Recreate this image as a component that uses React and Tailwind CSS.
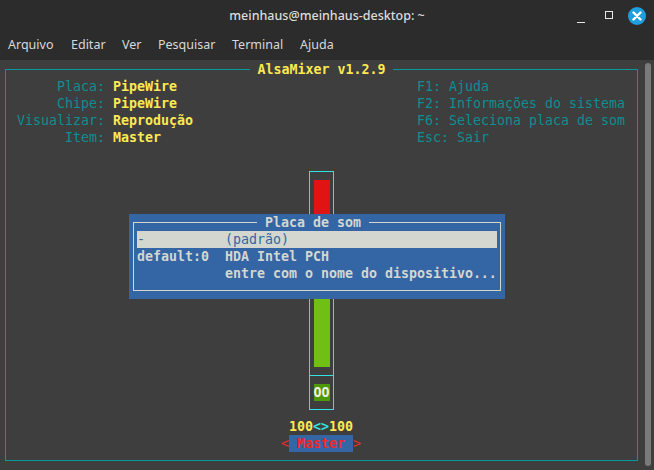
const mono = "font-['DejaVu_Sans_Mono','Liberation_Mono',monospace]";

function Row({ className = "", children }) {
  return <div className={"h-[17px] leading-[17px] whitespace-pre " + className}>{children}</div>;
}

const left = [
  ["Placa:", "PipeWire"],
  ["Chipe:", "PipeWire"],
  ["Visualizar:", "Reprodução"],
  ["Item:", "Master"],
];
const help = ["F1: Ajuda", "F2: Informações do sistema", "F6: Seleciona placa de som", "Esc: Sair"];
const menu = [
  ["Arquivo", "w-[63px]"],
  ["Editar", "w-[51px]"],
  ["Ver", "w-[36px]"],
  ["Pesquisar", "w-[74px]"],
  ["Terminal", "w-[68px]"],
  ["Ajuda", "w-[40px]"],
];

export default function App() {
  return (
    <div className="w-[654px] h-[470px] overflow-hidden bg-[#2c2c2c]">
      <div className="h-[60px] bg-[#2c2c2c] rounded-tr-[6px] flex flex-col font-['Noto_Sans',sans-serif] text-[12.5px] text-[#d8d8d8]">
        <div className="h-[32px] flex items-center relative">
          <div className="flex-1 text-center font-medium text-[#dcdcdc]">meinhaus@meinhaus-desktop: ~</div>
          <div className="absolute right-[8px] top-[7px] flex items-center">
            <svg width="8" height="8" viewBox="0 0 8 8" className="mt-[6px] mr-[20px]"><path d="M0 7.5H8" stroke="#e8e8e8" /></svg>
            <svg width="8" height="8" viewBox="0 0 8 8" className="-mt-[2px] mr-[15px]"><rect x="0.5" y="0.5" width="7" height="7" fill="none" stroke="#e8e8e8" /></svg>
            <div className="w-[18px] h-[18px] rounded-full bg-[#1f9ede] flex items-center justify-center">
              <svg width="10" height="10" viewBox="0 0 10 10"><path d="M1.5 1.5L8.5 8.5M8.5 1.5L1.5 8.5" stroke="#fff" strokeWidth="2.4" strokeLinecap="round" /></svg>
            </div>
          </div>
        </div>
        <div className="h-[28px] flex items-center pl-[8px] pb-[2px]">
          {menu.map(([m, w]) => <span key={m} className={w}>{m}</span>)}
        </div>
      </div>

      <div className={"relative h-[410px] pt-[9px] pl-[5px] text-[13.29px] font-normal bg-[#3e3e3e] " + mono}>
        <div className="absolute left-[645px] top-[3px] w-[6px] h-[403px] rounded-full bg-[#7a7a7a]" />

        <div className="w-[633px] h-[392px] border border-[#06989a] flex flex-col">
          <div className="self-center -mt-[9px] h-[17px] leading-[17px] px-[8px] bg-[#3e3e3e] font-bold text-[#fce94f] whitespace-pre">AlsaMixer v1.2.9</div>

          <div className="flex justify-between pr-[12px]">
            <div className="flex flex-col">
              {left.map(([a, b]) => (
                <Row key={a} className="flex gap-[8px]">
                  <span className="w-[99px] text-right text-[#0a8f96]">{a}</span>
                  <span className="font-bold text-[#fce94f]">{b}</span>
                </Row>
              ))}
            </div>
            <div className="flex flex-col w-[208px] text-[#0a8f96]">
              {help.map((h) => <Row key={h}>{h}</Row>)}
            </div>
          </div>

          <div className="self-center w-[65px] mt-[25px] flex flex-col items-start">
            <div className="ml-[20px] w-[25px] h-[239px] border border-[#34e2e2] flex flex-col items-center">
              <div className="w-[16px] h-[187px] mt-[8px] flex flex-col">
                <div className="h-[68px] bg-[#e01414]" />
                <div className="h-[51px] bg-[#fce94f]" />
                <div className="h-[68px] bg-[#6fbf14]" />
              </div>
              <div className="w-[23px] h-px mt-[8px] bg-[#34e2e2]" />
              <div className="w-[16px] h-[17px] mt-[8px] bg-[#4e9a06] text-center leading-[17px] font-bold text-[#eeeeec]">OO</div>
            </div>
            <Row className="mt-[8px] font-bold text-[#fce94f]">100<span className="text-[#34e2e2]">&lt;&gt;</span>100</Row>
            <Row className="flex -ml-[8px] text-[#ef2929]">
              <span className="w-[8px]">&lt;</span>
              <span className="w-[64px] bg-[#3465a4] font-bold text-center text-[#ef2929]">Master</span>
              <span className="w-[8px]">&gt;</span>
            </Row>
          </div>
        </div>

        <div className="absolute left-[129px] top-[154px] w-[376px] h-[85px] bg-[#3465a4] p-[4px] pt-[8px] text-[#d3d7cf]">
          <div className="h-[69px] border border-[#d3d7cf] flex flex-col px-[3px]">
            <div className="self-start ml-[120px] -mt-[9px] h-[17px] leading-[17px] px-[8px] bg-[#3465a4] font-bold whitespace-pre">Placa de som</div>
            <Row className="bg-[#d3d7cf] text-[#3465a4] flex">
              <span className="w-[88px]">-</span><span>(padrão)</span>
            </Row>
            <Row className="flex font-bold">
              <span className="w-[88px]">default:0</span><span>HDA Intel PCH</span>
            </Row>
            <Row className="flex font-bold">
              <span className="w-[88px]"></span><span>entre com o nome do dispositivo...</span>
            </Row>
          </div>
        </div>
      </div>
    </div>
  );
}
